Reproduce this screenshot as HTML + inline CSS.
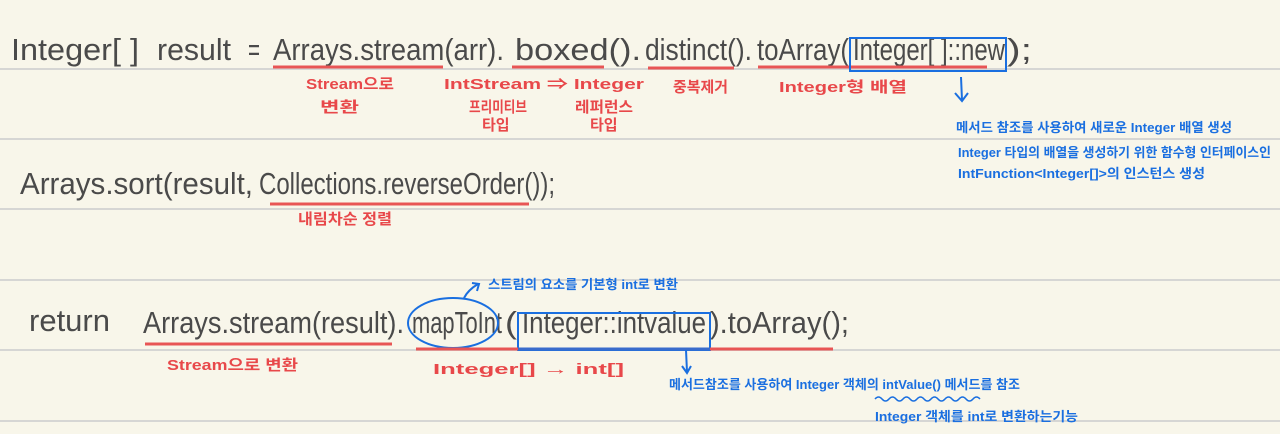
<!DOCTYPE html>
<html><head><meta charset="utf-8"><style>
html,body{margin:0;padding:0;background:#f8f6ea;}
svg{display:block}
.k{font-family:"Liberation Sans","Noto Sans CJK KR",sans-serif;fill:#4a4a4a;font-size:31px;}
.r{font-family:"Liberation Sans","Noto Sans CJK KR",sans-serif;fill:#e8484a;font-weight:bold;font-size:15px;}
.b{font-family:"Liberation Sans","Noto Sans CJK KR",sans-serif;fill:#1a6fe0;font-size:13px;font-weight:bold;}
</style></head><body>
<svg width="1280" height="434" viewBox="0 0 1280 434">
<rect width="1280" height="434" fill="#f8f6ea"/>
<g stroke="#d6d6d4" stroke-width="2">
<line x1="0" y1="69" x2="1280" y2="69"/><line x1="0" y1="139" x2="1280" y2="139"/>
<line x1="0" y1="209" x2="1280" y2="209"/><line x1="0" y1="280" x2="1280" y2="280"/>
<line x1="0" y1="350" x2="1280" y2="350"/><line x1="0" y1="421" x2="1280" y2="421"/>
</g>
<!-- line 1 -->
<g class="k" lengthAdjust="spacingAndGlyphs">
<text class="k" x="11" y="60" textLength="128" lengthAdjust="spacingAndGlyphs">Integer[ ]</text>
<text class="k" x="157" y="60" textLength="74" lengthAdjust="spacingAndGlyphs">result</text>
<text class="k" x="248" y="60" textLength="12" lengthAdjust="spacingAndGlyphs">=</text>
<text class="k" x="273" y="60" textLength="231" lengthAdjust="spacingAndGlyphs">Arrays.stream(arr).</text>
<text class="k" x="515" y="60" textLength="126" lengthAdjust="spacingAndGlyphs">boxed().</text>
<text class="k" x="645" y="60" textLength="107" lengthAdjust="spacingAndGlyphs">distinct().</text>
<text class="k" x="757" y="60" textLength="92" lengthAdjust="spacingAndGlyphs">toArray(</text>
<text class="k" x="853" y="60" textLength="152" lengthAdjust="spacingAndGlyphs">Integer[ ]::new</text>
<text class="k" x="1007" y="60" textLength="25" lengthAdjust="spacingAndGlyphs">);</text>
</g>
<g stroke="#e85555" stroke-width="3">
<line x1="273" y1="67" x2="443" y2="67"/><line x1="512" y1="67" x2="604" y2="67"/>
<line x1="648" y1="68" x2="734" y2="68"/><line x1="758" y1="67" x2="987" y2="67"/>
</g>
<rect x="850" y="38" width="156" height="33" fill="none" stroke="#1a6fe0" stroke-width="2"/>
<text class="r" x="306" y="89" textLength="88" lengthAdjust="spacingAndGlyphs">Stream으로</text>
<text class="r" x="320" y="112" textLength="39" lengthAdjust="spacingAndGlyphs">변환</text>
<text class="r" x="444" y="89" textLength="200" lengthAdjust="spacingAndGlyphs">IntStream ⇒ Integer</text>
<text class="r" x="469" y="112" font-size="13" textLength="58" lengthAdjust="spacingAndGlyphs">프리미티브</text>
<text class="r" x="482" y="130" font-size="13">타입</text>
<text class="r" x="575" y="112" font-size="13" textLength="58" lengthAdjust="spacingAndGlyphs">레퍼런스</text>
<text class="r" x="590" y="130" font-size="13">타입</text>
<text class="r" x="673" y="92" textLength="55" lengthAdjust="spacingAndGlyphs">중복제거</text>
<text class="r" x="779" y="92" textLength="128" lengthAdjust="spacingAndGlyphs">Integer형 배열</text>
<path d="M961 77 L962 100 M955 93 L962 101 L968 93" fill="none" stroke="#1a6fe0" stroke-width="2"/>
<text class="b" x="956" y="132" textLength="276" lengthAdjust="spacingAndGlyphs">메서드 참조를 사용하여 새로운 Integer 배열 생성</text>
<text class="b" x="958" y="157" textLength="313" lengthAdjust="spacingAndGlyphs">Integer 타입의 배열을 생성하기 위한 함수형 인터페이스인</text>
<text class="b" x="958" y="178" textLength="247" lengthAdjust="spacingAndGlyphs">IntFunction&lt;Integer[]&gt;의 인스턴스 생성</text>
<!-- line 2 -->
<text class="k" x="20" y="194" textLength="233" lengthAdjust="spacingAndGlyphs">Arrays.sort(result,</text>
<text class="k" x="259" y="194" textLength="296" lengthAdjust="spacingAndGlyphs">Collections.reverseOrder());</text>
<line x1="270" y1="204" x2="529" y2="204" stroke="#e85555" stroke-width="3"/>
<text class="r" x="298" y="224" font-size="14" textLength="94" lengthAdjust="spacingAndGlyphs">내림차순 정렬</text>
<!-- line 3 -->
<text class="k" x="29" y="331" textLength="81" lengthAdjust="spacingAndGlyphs">return</text>
<text class="k" x="143" y="333" textLength="261" lengthAdjust="spacingAndGlyphs">Arrays.stream(result).</text>
<text class="k" x="412" y="333" textLength="90" lengthAdjust="spacingAndGlyphs" font-size="27">mapToInt</text>
<text class="k" x="505" y="333" textLength="12" lengthAdjust="spacingAndGlyphs" font-size="27">(</text>
<text class="k" x="522" y="333" textLength="184" lengthAdjust="spacingAndGlyphs" font-size="27">Integer::intvalue</text>
<text class="k" x="710" y="333" textLength="139" lengthAdjust="spacingAndGlyphs" font-size="27">).toArray();</text>
<ellipse cx="453" cy="323" rx="45" ry="25" fill="none" stroke="#1a6fe0" stroke-width="2"/>
<rect x="518" y="313" width="192" height="37" fill="none" stroke="#1a6fe0" stroke-width="2"/>
<g stroke="#e85555" stroke-width="3">
<line x1="145" y1="344" x2="392" y2="344"/><line x1="416" y1="349" x2="518" y2="349"/><line x1="710" y1="349" x2="833" y2="349"/>
</g>
<line x1="518" y1="349" x2="710" y2="349" stroke="#3a6ccc" stroke-width="3"/>
<path d="M464 298 Q468 290 478 284 M472 283 L479 284 L477 291" fill="none" stroke="#1a6fe0" stroke-width="2"/>
<text class="b" x="488" y="289" textLength="190" lengthAdjust="spacingAndGlyphs">스트림의 요소를 기본형 int로 변환</text>
<text class="r" x="167" y="370" textLength="131" lengthAdjust="spacingAndGlyphs">Stream으로 변환</text>
<text class="r" x="433" y="374" textLength="191" lengthAdjust="spacingAndGlyphs">Integer[] → int[]</text>
<path d="M686 350 L687 372 M682 366 L687 373 L691 366" fill="none" stroke="#1a6fe0" stroke-width="2"/>
<text class="b" x="669" y="389" textLength="351" lengthAdjust="spacingAndGlyphs">메서드참조를 사용하여 Integer 객체의 intValue() 메서드를 참조</text>
<path d="M875 399 q3.5 -4 7 0 t7 0 t7 0 t7 0 t7 0 t7 0 t7 0 t7 0 t7 0 t7 0 t7 0 t7 0 t7 0 t7 0 t7 0" fill="none" stroke="#1a6fe0" stroke-width="1.5"/>
<text class="b" x="875" y="421" textLength="203" lengthAdjust="spacingAndGlyphs">Integer 객체를 int로 변환하는기능</text>
</svg>
</body></html>
